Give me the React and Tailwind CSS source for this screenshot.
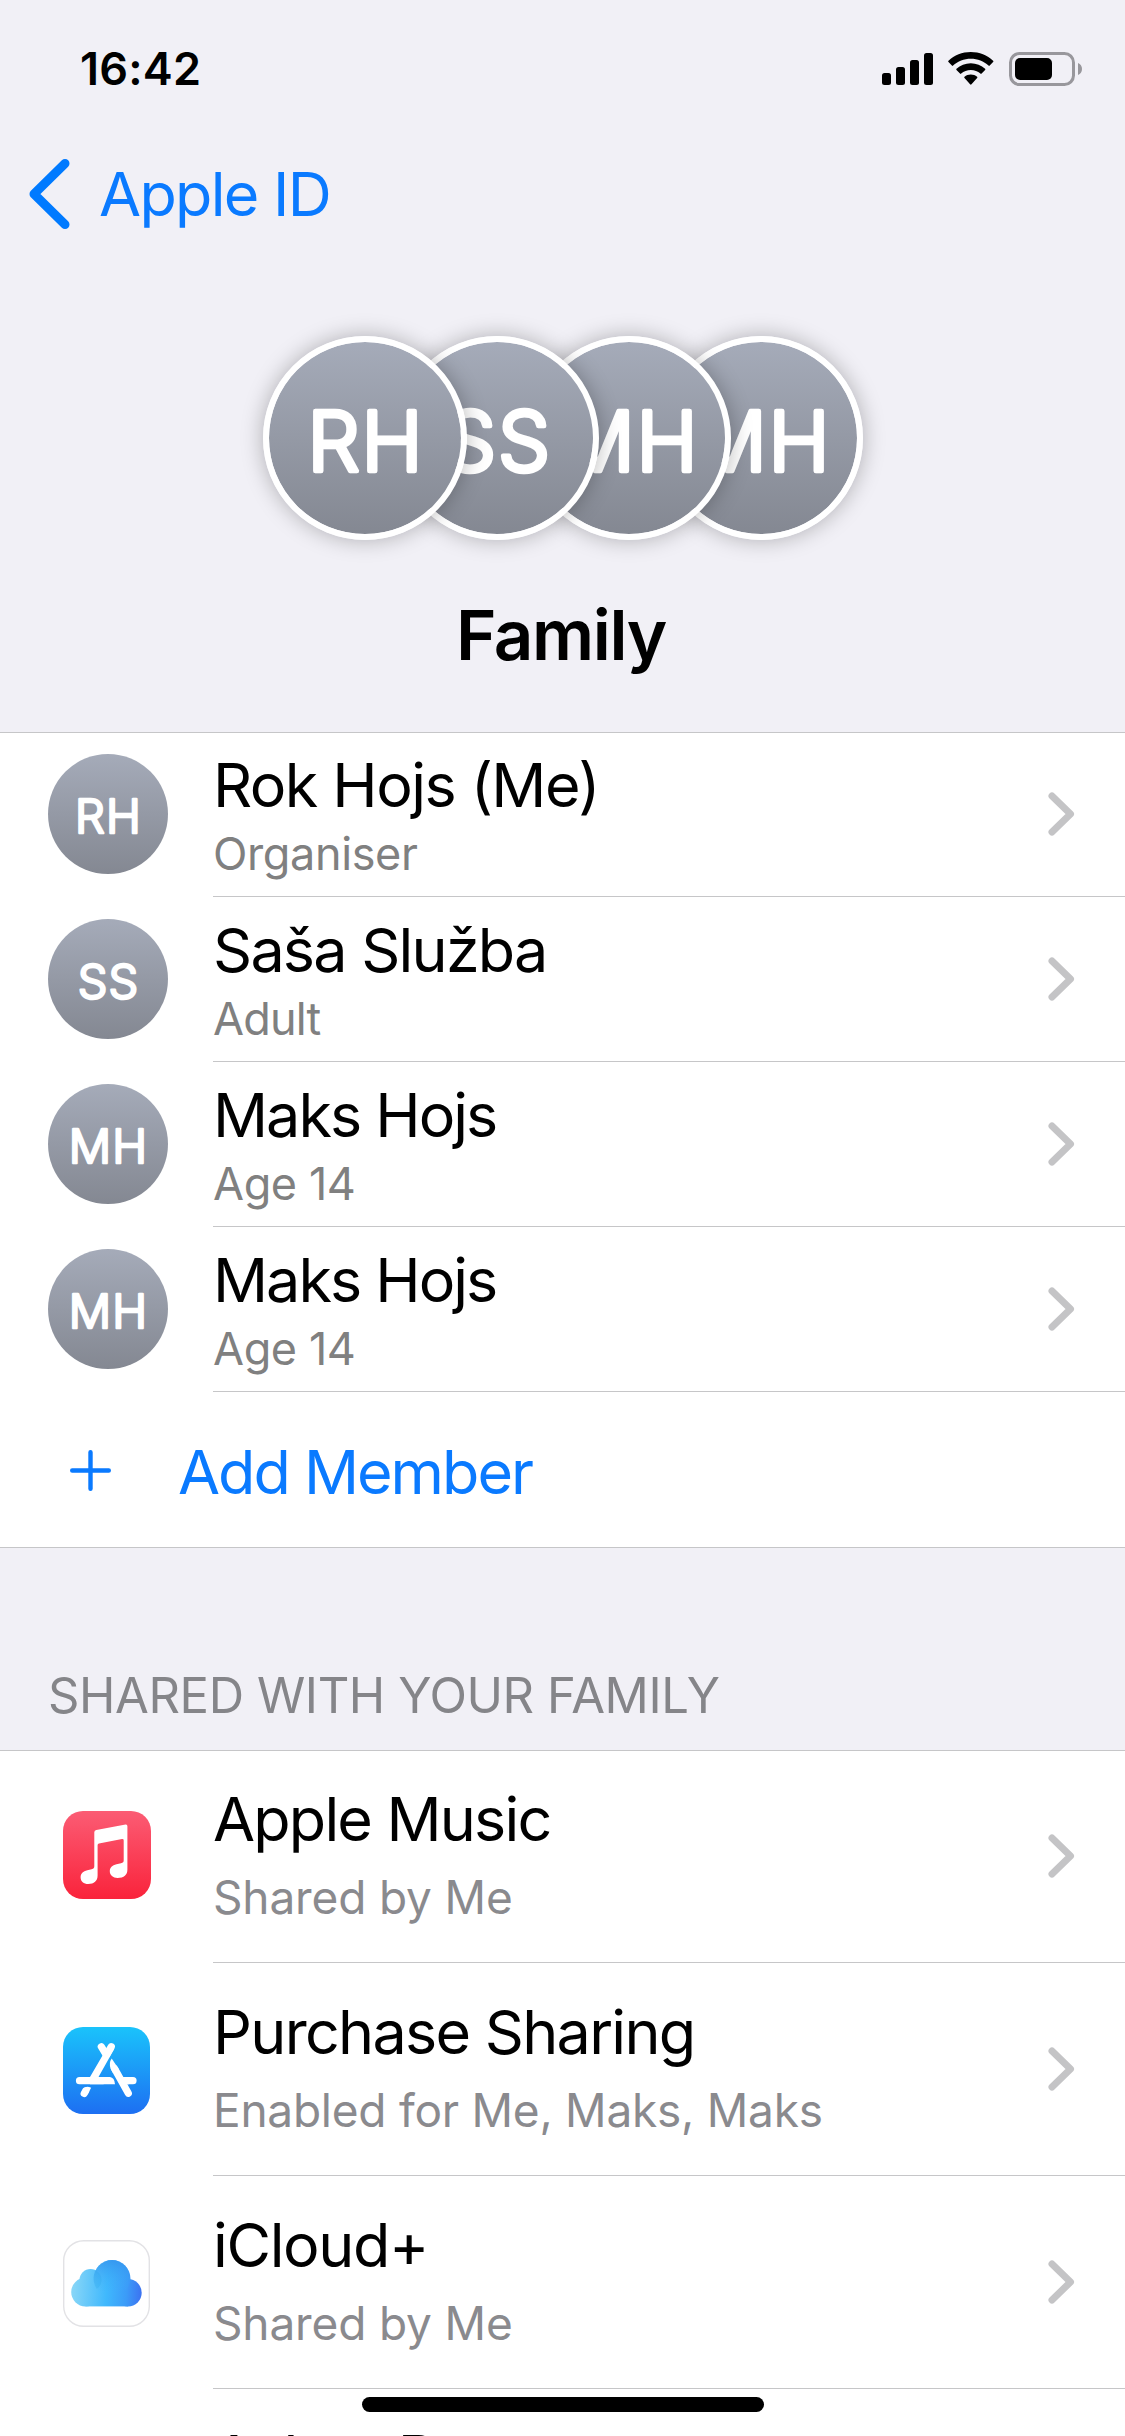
import React from 'react';

const members = [
  { initials: 'RH', name: 'Rok Hojs (Me)', role: 'Organiser', nameCls: 'tracking-[-1.55px]', roleCls: 'tracking-[-0.38px]', layer: 'z-40' },
  { initials: 'SS', name: 'Saša Služba', role: 'Adult', nameCls: 'tracking-[-1.76px]', roleCls: 'tracking-[-0.8px]', layer: 'z-30' },
  { initials: 'MH', name: 'Maks Hojs', role: 'Age 14', nameCls: 'tracking-[-1.98px]', roleCls: 'tracking-[-0.4px]', layer: 'z-20' },
  { initials: 'MH', name: 'Maks Hojs', role: 'Age 14', nameCls: 'tracking-[-1.98px]', roleCls: 'tracking-[-0.4px]', layer: 'z-10' },
];

// Initials in a rounded face: thin letters with a round-joined outline
const Initials = ({ text, large }) => (
  <svg viewBox="0 0 120 120" className="w-full h-full" fill="#fff" stroke="#fff" strokeLinejoin="round" strokeLinecap="round">
    <text
      x="60.6"
      y={large ? 80.4 : 78.5}
      textAnchor="middle"
      fontFamily="Inter, sans-serif"
      fontWeight="300"
      fontSize={large ? 51.5 : 47}
      strokeWidth={large ? 2.9 : 2.6}
      letterSpacing="1.2"
    >
      {text}
    </text>
  </svg>
);

const Chevron = () => (
  <svg width="28" height="44" viewBox="0 0 28 44" fill="none" stroke="#c4c4c6" strokeWidth="7" strokeLinecap="round" strokeLinejoin="round">
    <path d="M4 4 L22.5 22 L4 40" />
  </svg>
);

const MusicIcon = () => (
  <svg width="88" height="88" viewBox="0 0 88 88">
    <defs>
      <linearGradient id="music" x1="0" y1="0" x2="0" y2="1">
        <stop offset="0" stopColor="#fb5c74" />
        <stop offset="1" stopColor="#fa233b" />
      </linearGradient>
    </defs>
    <rect width="88" height="88" rx="20" fill="url(#music)" />
    <path
      fill="#fff"
      d="M33.3 19 L62.6 13.6 Q64.4 13.4 64.4 15.2 V58.5 C64.4 64 61 67 54.5 67 C50 67 46.8 64.2 46.8 60.3 C46.8 56.6 49.2 54.2 53.5 53.2 L58 52.2 C60 51.8 60.7 51 60.7 49.2 V29.4 Q60.7 27.7 59 28 L36 32.4 Q34.6 32.7 34.6 34.2 V64.5 C34.6 70 31 73 25.2 73 C20.7 73 17.6 70.2 17.6 66.4 C17.6 62.6 20 60.2 24.3 59.2 L28.6 58.2 C30.6 57.7 31.3 57 31.3 55 V21.3 Q31.3 19.4 33.3 19 Z"
    />
  </svg>
);

const AppStoreIcon = () => (
  <svg width="87" height="87" viewBox="0 0 87 87">
    <defs>
      <linearGradient id="store" x1="0" y1="0" x2="0" y2="1">
        <stop offset="0" stopColor="#1ac3fb" />
        <stop offset="1" stopColor="#1d6ff2" />
      </linearGradient>
    </defs>
    <rect width="87" height="87" rx="20" fill="url(#store)" />
    <g stroke="#fff" strokeWidth="7.2" strokeLinecap="round" fill="none">
      <path d="M48.3 19.7 L44 27" />
      <path d="M38.3 19.7 L43.4 28" />
      <path d="M16.5 53.7 H40" />
      <path d="M64.7 53.7 H70" />
      <path d="M51.5 41.5 L65.3 66.3" />
      <path d="M22.6 63.9 L21.2 66.4" />
    </g>
    <path fill="#fff" d="M51.5 21.4 L35.5 50.1 H47 Q51.5 50.6 52 57.3 H27 V50.1 L40.1 27.5 Z" />
    <path fill="#fff" d="M48.7 31.4 Q45.5 35.8 47.7 41.8 L50 46 L56 42.5 Z" />
    <path fill="#fff" d="M19.5 62 L22.1 60.2 Q24.6 59 28.2 60.8 L24.5 67.6 Z" />
    <path fill="#fff" d="M56 50.1 H66 V57.3 H60 Z" />
  </svg>
);

const CloudIcon = () => (
  <svg width="87" height="87" viewBox="0 0 87 87">
    <defs>
      <linearGradient id="cloud" gradientUnits="userSpaceOnUse" x1="8" y1="52" x2="79" y2="56">
        <stop offset="0" stopColor="#8ad7f7" />
        <stop offset="0.5" stopColor="#3fb8fd" />
        <stop offset="0.78" stopColor="#3b9bf8" />
        <stop offset="1" stopColor="#3c71f1" />
      </linearGradient>
      <linearGradient id="puff" gradientUnits="userSpaceOnUse" x1="44" y1="20" x2="44" y2="52">
        <stop offset="0" stopColor="#3490ec" stopOpacity="0.75" />
        <stop offset="1" stopColor="#3fb2fb" stopOpacity="0" />
      </linearGradient>
      <clipPath id="bigPuff">
        <circle cx="49" cy="38.5" r="18.4" />
      </clipPath>
    </defs>
    <rect x="0.7" y="0.7" width="85.6" height="85.6" rx="20" fill="#fff" stroke="#e2e2e5" strokeWidth="1.4" />
    <g fill="url(#cloud)">
      <circle cx="27.5" cy="40" r="11" />
      <circle cx="22.5" cy="52.1" r="14.3" />
      <circle cx="49" cy="38.5" r="18.4" />
      <circle cx="65" cy="52.8" r="13.7" />
      <rect x="22.5" y="40" width="42.5" height="26.4" />
    </g>
    <g clipPath="url(#bigPuff)">
      <rect x="30" y="19" width="38" height="38" fill="url(#puff)" />
      <circle cx="27.5" cy="40" r="11" fill="#1fa2e8" opacity="0.2" />
    </g>
  </svg>
);

const services = [
  { icon: <MusicIcon />, iconCls: 'mb-[64px]', title: 'Apple Music', sub: 'Shared by Me', titleCls: 'tracking-[-1.8px]', subCls: 'tracking-[-0.15px]' },
  { icon: <AppStoreIcon />, iconCls: 'mb-[62px]', title: 'Purchase Sharing', sub: 'Enabled for Me, Maks, Maks', titleCls: 'tracking-[-1.7px]', subCls: 'tracking-[-0.24px]' },
  { icon: <CloudIcon />, iconCls: 'mb-[62px]', title: 'iCloud+', sub: 'Shared by Me', titleCls: 'tracking-[-1.35px]', subCls: 'tracking-[-0.15px]' },
  { icon: null, iconCls: '', title: 'Ask to Buy', sub: '', titleCls: 'tracking-[-1.9px] pb-px', subCls: '' },
];

const StatusBar = () => (
  <div className="h-[137px] flex items-center justify-between pl-[80px] pr-[43px]">
    <span className="text-[45px] leading-[55px] font-semibold tracking-[0.22px]">16:42</span>
    <div className="flex items-center">
      <svg width="51" height="35" viewBox="0 0 51 35">
        <rect x="0" y="22" width="9" height="12" rx="2.5" />
        <rect x="14" y="16" width="9" height="18" rx="2.5" />
        <rect x="28" y="9" width="9" height="25" rx="2.5" />
        <rect x="42" y="2" width="9" height="32" rx="2.5" />
      </svg>
      <svg className="ml-[15px]" width="46" height="35" viewBox="0 0 46 35">
        <path d="M22.8 1 C31.4 1 39.3 4.3 45.1 9.8 Q45.7 10.4 45.1 11 L41.7 14.6 Q41.1 15.2 40.5 14.6 C35.8 10.3 29.6 7.8 22.8 7.8 C16 7.8 9.8 10.3 5.1 14.6 Q4.5 15.2 3.9 14.6 L0.5 11 Q-0.1 10.4 0.5 9.8 C6.3 4.3 14.2 1 22.8 1 Z" />
        <path d="M22.8 12.2 C28.3 12.2 33.3 14.3 37.1 17.8 Q37.7 18.4 37.1 19 L33.6 22.6 Q33 23.2 32.4 22.6 C29.8 20.3 26.5 19 22.8 19 C19.1 19 15.8 20.3 13.2 22.6 Q12.6 23.2 12 22.6 L8.5 19 Q7.9 18.4 8.5 17.8 C12.3 14.3 17.3 12.2 22.8 12.2 Z" />
        <path d="M22.8 23.5 C25.2 23.5 27.4 24.3 29.1 25.7 Q29.8 26.3 29.1 27 L23.5 33.3 Q22.8 34.1 22.1 33.3 L16.5 27 Q15.8 26.3 16.5 25.7 C18.2 24.3 20.4 23.5 22.8 23.5 Z" />
      </svg>
      <svg className="ml-[15px]" width="73" height="35" viewBox="0 0 73 35">
        <rect x="1.5" y="2.5" width="63" height="31" rx="9" fill="none" stroke="#98979c" strokeWidth="3" />
        <rect x="6" y="7" width="37" height="22" rx="5" />
        <path d="M69 12 C71.5 13 73 15.3 73 18 C73 20.7 71.5 23 69 24 Z" fill="#98979c" />
      </svg>
    </div>
  </div>
);

const App = () => (
  <div className="relative w-[1125px] h-[2436px] overflow-hidden bg-[#f1f0f6] text-black font-[Inter,sans-serif]">
    <StatusBar />

    {/* Back link */}
    <div className="h-[114px] flex items-center pl-[28px] text-[#0a7aff]">
      <svg width="44" height="72" viewBox="0 0 44 72" fill="none" stroke="#007aff" strokeWidth="9" strokeLinecap="round" strokeLinejoin="round">
        <path d="M37 5.5 L6 36 L37 66.5" />
      </svg>
      <span className="ml-[27px] text-[61px] leading-[74px] tracking-[-1.7px]">Apple ID</span>
    </div>

    {/* Family header */}
    <div className="mt-[85px] flex justify-center pl-[73px]">
      {members.map((m, i) => (
        <div
          key={i}
          className={`relative ${m.layer} -ml-[72px] w-[204px] h-[204px] rounded-full border-[6px] border-white bg-clip-padding bg-gradient-to-b from-[#a5abb9] to-[#848892] shadow-[0_0_22px_rgba(0,0,0,0.28)]`}
        >
          <Initials text={m.initials} large />
        </div>
      ))}
    </div>
    <h1 className="mt-[53px] mb-[55px] pr-[3px] text-center text-[69px] leading-[84px] font-semibold tracking-[-1.34px]">Family</h1>

    {/* Members */}
    <div className="bg-white border-y border-[#c6c6c8]">
      {members.map((m, i) => (
        <div key={i} className="h-[165px] first:h-[164px] flex items-end pl-[48px]">
          <div className="w-[120px] h-[120px] mb-[23px] rounded-full bg-gradient-to-b from-[#a5abb9] to-[#848892]">
            <Initials text={m.initials} />
          </div>
          <div className="flex-1 ml-[45px] flex items-end justify-between border-b border-[#c6c6c8] pr-[49px]">
            <div className="pb-[15px]">
              <div className={`text-[61px] leading-[74px] ${m.nameCls}`}>{m.name}</div>
              <div className={`mt-[4px] text-[45px] leading-[55px] text-[#808080] ${m.roleCls}`}>{m.role}</div>
            </div>
            <div className="mb-[60px]">
              <Chevron />
            </div>
          </div>
        </div>
      ))}
      <div className="h-[155px] flex items-center pt-[5px] pl-[70px] text-[#0a7aff]">
        <svg width="41" height="44" viewBox="0 0 41 44" stroke="#0a7aff" strokeWidth="4.4" strokeLinecap="round">
          <path d="M2.2 20.5 H38.8 M20.5 2.2 V38.8" />
        </svg>
        <span className="ml-[67px] text-[61px] leading-[74px] tracking-[-2px]">Add Member</span>
      </div>
    </div>

    {/* Shared services */}
    <div className="pt-[118px] pb-[25px] pl-[48px] text-[49px] leading-[59px] tracking-[-0.4px] text-[#858589]">SHARED WITH YOUR FAMILY</div>
    <div className="bg-white border-t border-[#c6c6c8]">
      {services.map((s) => (
        <div key={s.title} className="h-[213px] first:h-[212px] flex items-end pl-[63px]">
          <div className={`w-[88px] ${s.iconCls}`}>{s.icon}</div>
          <div className="flex-1 ml-[62px] flex items-end justify-between border-b border-[#c6c6c8] pr-[49px]">
            <div className="pb-[37px]">
              <div className={`text-[61px] leading-[74px] ${s.titleCls}`}>{s.title}</div>
              <div className={`mt-[13px] h-[56px] text-[46px] leading-[56px] text-[#8a8a8e] ${s.subCls}`}>{s.sub}</div>
            </div>
            <div className="mb-[84px]">
              <Chevron />
            </div>
          </div>
        </div>
      ))}
    </div>

    {/* Home indicator */}
    <div className="absolute left-[362px] bottom-[24px] w-[402px] h-[15px] rounded-full bg-black" />
  </div>
);

export default App;
